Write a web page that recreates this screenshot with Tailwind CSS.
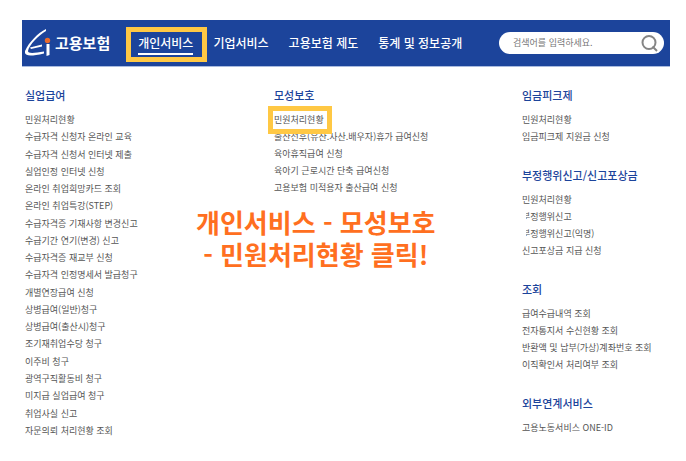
<!DOCTYPE html>
<html lang="ko">
<head>
  <meta charset="UTF-8">
  <meta name="viewport" content="width=device-width, initial-scale=1.0">
  <title>고용보험</title>
  <script src="https://cdn.jsdelivr.net/npm/@tailwindcss/browser@4"></script>
</head>
<body class="bg-white font-['Noto_Sans_CJK_KR',sans-serif] text-[#555]">
  <div class="relative min-h-screen flex flex-col pl-[22px] pr-4 pt-5 pb-[22px]">
    <!-- Header -->
    <header class="h-[47px] flex items-center bg-[#1c449b] border-b border-[#a9bbdf] pl-[3px] pr-[6px]">
      <a href="#" class="flex items-center gap-1 text-white">
        <svg class="w-[26px] h-7" viewBox="0 0 26 28" aria-hidden="true">
          <path d="M21 0C13 4 4 13 0 22C-1 27 4 28 19 24.500V22.500C10 24 3 25 3 22C4 16 14 6 21 2Z" fill="#fff" />
          <path d="M5 18.500L17 15.500V17.500L6 20Z" fill="#fff" />
          <path d="M21.500 15H24.500V26L21.500 27Z" fill="#fff" />
          <circle cx="22.500" cy="11.500" r="2.700" fill="#ea6a2c" />
        </svg>
        <span class="text-[15px] leading-5 font-bold">고용보험</span>
      </a>
      <nav class="ml-7 flex items-center gap-5 text-xs leading-5 font-medium text-white whitespace-nowrap">
        <a href="#" class="relative">
          개인서비스
          <span class="absolute left-0 top-full w-full h-0.5 bg-white"></span>
          <span class="absolute -left-3 -right-[14px] -top-[6px] h-[35px] border-5 border-[#ffc844]"></span>
        </a>
        <a href="#">기업서비스</a>
        <a href="#">고용보험 제도</a>
        <a href="#">통계 및 정보공개</a>
      </nav>
      <form class="ml-auto w-[165px] h-[22px] flex items-center rounded-full bg-white pl-[14px] pr-[6px]">
        <input type="text" aria-label="검색어" placeholder="검색어를 입력하세요." class="min-w-0 flex-1 text-[9px] outline-none placeholder:text-[#777]">
        <button type="submit" aria-label="검색">
          <svg class="size-[17px]" viewBox="0 0 17 17" fill="none" stroke="#858585" stroke-width="2">
            <circle cx="8" cy="7.500" r="6.500" />
            <path d="M11.500 11.500L16 16" />
          </svg>
        </button>
      </form>
    </header>

    <!-- Site menu -->
    <main class="flex-1 grid grid-cols-[249fr_248fr_148fr] pl-[3px] pt-5 text-[9px] leading-[17px] whitespace-nowrap">
      <section class="flex flex-col">
        <h2 class="mb-[7px] text-[11px] leading-[17px] font-medium text-[#1c449b]">실업급여</h2>
        <ul class="flex-1 flex flex-col justify-between">
          <li><a href="#">민원처리현황</a></li>
          <li><a href="#">수급자격 신청자 온라인 교육</a></li>
          <li><a href="#">수급자격 신청서 인터넷 제출</a></li>
          <li><a href="#">실업인정 인터넷 신청</a></li>
          <li><a href="#">온라인 취업희망카드 조회</a></li>
          <li><a href="#">온라인 취업특강(STEP)</a></li>
          <li><a href="#">수급자격증 기재사항 변경신고</a></li>
          <li><a href="#">수급기간 연기(변경) 신고</a></li>
          <li><a href="#">수급자격증 재교부 신청</a></li>
          <li><a href="#">수급자격 인정명세서 발급청구</a></li>
          <li><a href="#">개별연장급여 신청</a></li>
          <li><a href="#">상병급여(일반)청구</a></li>
          <li><a href="#">상병급여(출산시)청구</a></li>
          <li><a href="#">조기재취업수당 청구</a></li>
          <li><a href="#">이주비 청구</a></li>
          <li><a href="#">광역구직활동비 청구</a></li>
          <li><a href="#">미지급 실업급여 청구</a></li>
          <li><a href="#">취업사실 신고</a></li>
          <li><a href="#">자문의뢰 처리현황 조회</a></li>
        </ul>
      </section>

      <section>
        <h2 class="mb-[7px] text-[11px] leading-[17px] font-medium text-[#1c449b]">모성보호</h2>
        <ul>
          <li class="relative">
            <a href="#">민원처리현황</a>
            <span class="absolute -left-[6px] -top-[5px] w-16 h-7 border-5 border-[#ffc844]"></span>
          </li>
          <li><a href="#">출산전후(유산.사산.배우자)휴가 급여신청</a></li>
          <li><a href="#">육아휴직급여 신청</a></li>
          <li><a href="#">육아기 근로시간 단축 급여신청</a></li>
          <li><a href="#">고용보험 미적용자 출산급여 신청</a></li>
        </ul>
      </section>

      <div class="flex flex-col gap-[22px]">
        <section>
          <h2 class="mb-[7px] text-[11px] leading-[17px] font-medium text-[#1c449b]">임금피크제</h2>
          <ul>
            <li><a href="#">민원처리현황</a></li>
            <li><a href="#">임금피크제 지원금 신청</a></li>
          </ul>
        </section>
        <section>
          <h2 class="mb-[7px] text-[11px] leading-[17px] font-medium text-[#1c449b]">부정행위신고/신고포상금</h2>
          <ul>
            <li><a href="#">민원처리현황</a></li>
            <!-- the first syllable is partly covered on these two -->
            <li class="relative">
              <a href="#">부정행위신고</a>
              <span class="absolute left-0 top-0 w-1 h-full bg-white"></span>
              <span class="absolute left-0 bottom-0 w-2 h-[6px] bg-white"></span>
            </li>
            <li class="relative">
              <a href="#">부정행위신고(익명)</a>
              <span class="absolute left-0 top-0 w-1 h-full bg-white"></span>
              <span class="absolute left-0 bottom-0 w-2 h-[6px] bg-white"></span>
            </li>
            <li><a href="#">신고포상금 지급 신청</a></li>
          </ul>
        </section>
        <section>
          <h2 class="mb-[7px] text-[11px] leading-[17px] font-medium text-[#1c449b]">조회</h2>
          <ul>
            <li><a href="#">급여수급내역 조회</a></li>
            <li><a href="#">전자통지서 수신현황 조회</a></li>
            <li><a href="#">반환액 및 납부(가상)계좌번호 조회</a></li>
            <li><a href="#">이직확인서 처리여부 조회</a></li>
          </ul>
        </section>
        <section>
          <h2 class="mb-[7px] text-[11px] leading-[17px] font-medium text-[#1c449b]">외부연계서비스</h2>
          <ul>
            <li><a href="#">고용노동서비스 ONE-ID</a></li>
          </ul>
        </section>
      </div>
    </main>

    <!-- Callout over the menu -->
    <p class="absolute left-[196px] top-[206px] text-center text-[26px] leading-8 font-bold text-[#ff6f20] whitespace-nowrap">개인서비스 - 모성보호<br>- 민원처리현황 클릭!</p>
  </div>
</body>
</html>
